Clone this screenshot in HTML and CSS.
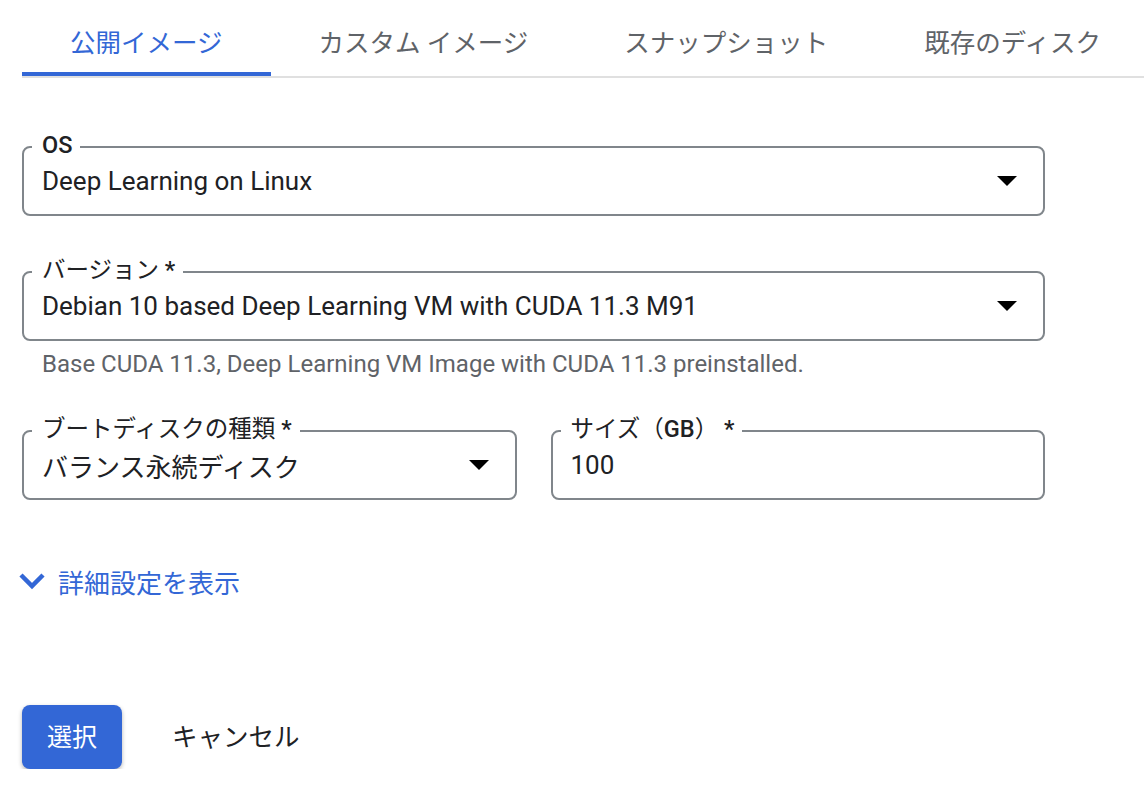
FILE: index.html
```html
<!DOCTYPE html>
<html lang="ja">
<head>
    <meta charset="UTF-8">
    <title>イメージの選択</title>
    <link rel="stylesheet" href="styles.css">
</head>
<body>
    <div class="tabs">
        <div class="tab active">公開イメージ</div>
        <div class="tab">カスタム イメージ</div>
        <div class="tab">スナップショット</div>
        <div class="tab">既存のディスク</div>
    </div>

    <div class="form">
        <div class="field">
            <span class="label"><b>OS</b></span>
            <span class="value">Deep Learning on Linux</span>
            <svg class="arrow" width="20" height="10" viewBox="0 0 20 10"><polygon points="0,0 20,0 10,10"/></svg>
        </div>

        <div class="field field-version">
            <span class="label">バージョン <b>*</b></span>
            <span class="value">Debian 10 based Deep Learning VM with CUDA 11.3 M91</span>
            <svg class="arrow" width="20" height="10" viewBox="0 0 20 10"><polygon points="0,0 20,0 10,10"/></svg>
        </div>
        <div class="hint">Base CUDA 11.3, Deep Learning VM Image with CUDA 11.3 preinstalled.</div>

        <div class="row">
            <div class="field">
                <span class="label">ブートディスクの種類 <b>*</b></span>
                <span class="value">バランス永続ディスク</span>
                <svg class="arrow" width="20" height="10" viewBox="0 0 20 10"><polygon points="0,0 20,0 10,10"/></svg>
            </div>
            <div class="field">
                <span class="label">サイズ（<b>GB</b>） <b>*</b></span>
                <span class="value">100</span>
            </div>
        </div>

        <div class="more">
            <svg width="28" height="18" viewBox="0 0 28 18"><polyline points="3,3 14,14 25,3" fill="none" stroke="#3367d6" stroke-width="4.5"/></svg>
            <span>詳細設定を表示</span>
        </div>

        <div class="actions">
            <button class="btn-primary">選択</button>
            <button class="btn-text">キャンセル</button>
        </div>
    </div>
</body>
</html>
```

FILE: styles.css
```css
* {
    padding: 0;
    margin: 0;
    box-sizing: border-box;
}
body {
    background: #fff;
    color: #202124;
    font-family: Roboto, "Noto Sans CJK JP", sans-serif;
    padding-left: 22px;
}
.tabs {
    display: flex;
    border-bottom: 2px solid #e0e0e0;
}
.tab {
    height: 76px;
    padding: 8px 48px 0;
    border-bottom: 4px solid transparent;
    display: flex;
    align-items: center;
    font-size: 25.5px;
    color: #5f6368;
    white-space: nowrap;
}
.tab.active {
    color: #3367d6;
    border-bottom-color: #3367d6;
}
.form {
    width: 1023px;
    padding-top: 68px;
}
.field {
    position: relative;
    height: 70px;
    border: 2px solid #80868b;
    border-radius: 8px;
    display: flex;
    align-items: center;
    padding: 0 26px 0 18px;
}
.field-version {
    margin-top: 55px;
}
.label {
    position: absolute;
    top: -19px;
    left: 8px;
    padding: 0 8px 0 10px;
    background: #fff;
    font-size: 23.5px;
    line-height: 32px;
    color: #202124;
}
.label b {
    font-weight: 500;
}
.value {
    flex: 1;
    font-size: 26px;
    white-space: nowrap;
}
.arrow {
    fill: #000;
}
.hint {
    margin-top: 7px;
    padding-left: 20px;
    font-size: 24px;
    line-height: 32px;
    color: #5f6368;
}
.row {
    margin-top: 50px;
    display: grid;
    grid-template-columns: 1fr 1fr;
    gap: 34px;
}
.more {
    margin-top: 65px;
    margin-left: -4px;
    display: flex;
    align-items: center;
    gap: 12px;
    height: 32px;
    font-size: 26px;
    color: #3367d6;
}
.actions {
    margin-top: 108px;
    display: flex;
    align-items: center;
    gap: 50px;
}
.btn-primary {
    width: 100px;
    height: 64px;
    padding-bottom: 5px;
    border: none;
    border-radius: 8px;
    background: #3367d6;
    color: #fff;
    font-family: inherit;
    font-size: 25px;
    box-shadow: 0 2px 4px rgba(0, 0, 0, 0.3);
}
.btn-text {
    padding-bottom: 5px;
    border: none;
    background: none;
    color: #202124;
    font-family: inherit;
    font-size: 25.5px;
}
```
